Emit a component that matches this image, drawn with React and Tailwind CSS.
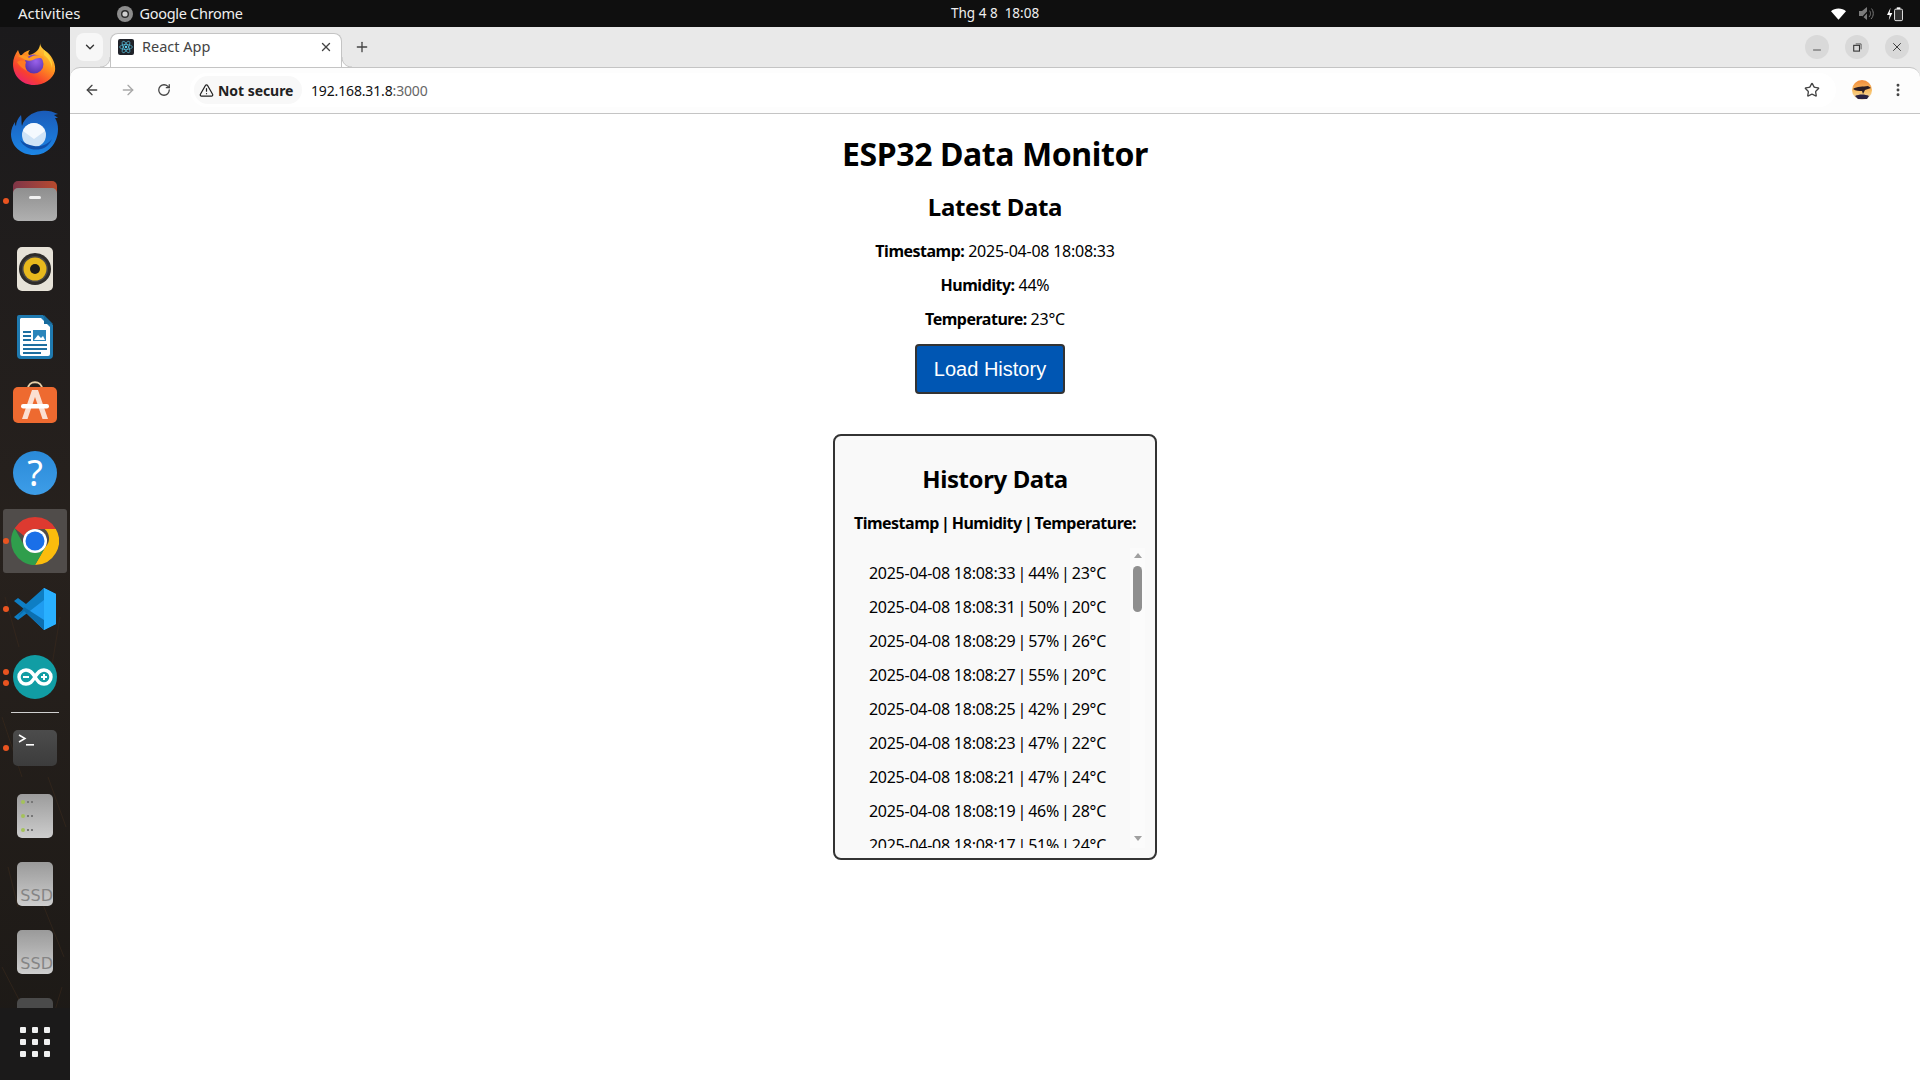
import React from "react";
import { ArrowLeft, ArrowRight, RotateCw, TriangleAlert, Star, EllipsisVertical, X, Plus, ChevronDown, Minus } from "lucide-react";

const rows = [
  ["33", "44", "23"], ["31", "50", "20"], ["29", "57", "26"], ["27", "55", "20"], ["25", "42", "29"],
  ["23", "47", "22"], ["21", "47", "24"], ["19", "46", "28"], ["17", "51", "24"],
];

const Firefox = () => (
  <svg width="44" height="44" viewBox="0 0 44 44" className="-mt-[2px]">
    <defs>
      <linearGradient id="ff1" x1="0.85" y1="0" x2="0.2" y2="1"><stop offset="0" stopColor="#ffe34a" /><stop offset="0.4" stopColor="#ff9a1e" /><stop offset="0.75" stopColor="#f8402f" /><stop offset="1" stopColor="#e81d7a" /></linearGradient>
      <radialGradient id="ff2" cx="0.6" cy="0.35" r="0.7"><stop offset="0" stopColor="#9a62ec" /><stop offset="1" stopColor="#5530a8" /></radialGradient>
    </defs>
    <path d="M27 0c0 5 3 7 7 10 6 5 9 13 8 19-2 8-11 14-21 14C9 43 0 34 0 22c0-5 2-10 5-14 1 3 2 5 3 6 2-3 5-5 9-6-2 2-2 4-1 5 6-1 12-6 11-13z" fill="url(#ff1)" />
    <circle cx="21" cy="22" r="9.5" fill="url(#ff2)" />
    <path d="M5 14c5-2 8-1 11 2 4-3 9-4 14-1l1 2c-4-2-8-1-11 1-3 1-7 1-9-1-2-1-4-2-6-3z" fill="#ff9a24" />
    <path d="M4 20c3-2 7-2 9 0-1 3-1 6 1 9-4-2-8-5-10-9z" fill="#ff7a20" />
    <path d="M31 8c5 4 9 11 8 18-1-6-4-10-8-13z" fill="#ffd23a" />
  </svg>
);

const Thunderbird = () => (
  <svg width="48" height="46" viewBox="0 0 48 46">
    <defs><linearGradient id="tb" x1="0.5" y1="0" x2="0.5" y2="1"><stop offset="0" stopColor="#1a5bb8" /><stop offset="1" stopColor="#1c86e6" /></linearGradient></defs>
    <path d="M10 5c1 4 0 8 1 11C13 8 21 2 30 1c6-1 11 0 17 3l-4 1 4 3-3 0c2 3 3 7 3 11 0 14-10 26-24 26C10 45 0 36 0 24 0 19 2 15 4 12c0 2 0 3 1 4 0-4 2-8 5-11z" fill="url(#tb)" />
    <circle cx="23" cy="25" r="12" fill="#cfe3f6" />
    <path d="M12 21l11 8 11-8c-2-5-7-8-11-8-5 0-9 3-11 8z" fill="#f4f9fe" />
    <path d="M9 30c4 8 13 11 21 9 5-1 9-5 11-10-5 6-11 8-18 7-6-1-10-3-14-6z" fill="#0f50ab" />
  </svg>
);

const Files = () => (
  <div className="relative w-[44px] h-[40px]">
    <div className="absolute inset-x-0 top-0 h-[20px] rounded-t-[5px] bg-gradient-to-r from-[#7f3547] to-[#b84a2c]" />
    <div className="absolute inset-x-0 bottom-0 h-[33px] rounded-[5px] bg-gradient-to-b from-[#8f8f8f] to-[#b0b0b0] flex justify-center pt-[8px]">
      <div className="w-[12px] h-[3px] rounded-[2px] bg-[#f1f1f1]" />
    </div>
  </div>
);

const Rhythmbox = () => (
  <div className="w-[36px] h-[44px] rounded-[5px] bg-[#e6e2d8] flex items-center justify-center">
    <svg width="32" height="32" viewBox="0 0 32 32">
      <circle cx="16" cy="16" r="16" fill="#2e2c2a" />
      <circle cx="16" cy="16" r="13" fill="#4a4846" />
      <circle cx="16" cy="16" r="11.5" fill="#e8b91d" />
      <circle cx="16" cy="16" r="5" fill="#1d1c1a" />
    </svg>
  </div>
);

const Writer = () => (
  <svg width="38" height="46" viewBox="0 0 38 46">
    <path d="M3 1h24l10 10v30a4 4 0 0 1-4 4H5a4 4 0 0 1-4-4V3a2 2 0 0 1 2-2z" fill="#1f7ab0" />
    <path d="M5 4h20l9 9v27a2 2 0 0 1-2 2H6a2 2 0 0 1-2-2V5z" fill="#ffffff" />
    <path d="M28 1l9 9h-9z" fill="#176a9c" />
    <rect x="7" y="17" width="8" height="2" fill="#1f6fa0" />
    <rect x="7" y="21" width="8" height="2" fill="#1f6fa0" />
    <rect x="7" y="25" width="8" height="2" fill="#1f6fa0" />
    <rect x="17" y="16" width="13" height="11" fill="#2b86bb" />
    <path d="M18 26l4-5 3 3 2-2 2 4z" fill="#fff" />
    <rect x="7" y="30" width="24" height="2" fill="#1f6fa0" />
    <rect x="7" y="34" width="24" height="2" fill="#1f6fa0" />
    <rect x="7" y="38" width="18" height="2" fill="#1f6fa0" />
  </svg>
);

const AppStore = () => (
  <svg width="44" height="44" viewBox="0 0 44 44" className="-mt-[4px]">
    <path d="M15 8c0-9 14-9 14 0" fill="none" stroke="#e8cfa8" strokeWidth="2" />
    <rect x="0" y="6" width="44" height="36" rx="5" fill="#ee6a30" />
    <path d="M19 9h6l10 29h-5.500l-7.500-22-7.500 22H9z" fill="#fbdfd2" />
    <rect x="8" y="23" width="28" height="4.500" rx="2.200" fill="#fff" />
  </svg>
);

const Help = () => (
  <div className="w-[44px] h-[44px] rounded-full bg-gradient-to-b from-[#2a8ad8] to-[#3d9de8] flex items-center justify-center">
    <span className="font-['Noto_Sans',sans-serif] text-[36px] leading-none text-white">?</span>
  </div>
);

const ChromeIcon = ({ size = 48 }) => (
  <svg width={size} height={size} viewBox="0 0 48 48">
    <path d="M24 0a24 24 0 0 1 20.800 12H24a12 12 0 0 0-10.900 7L3.700 11.300A24 24 0 0 1 24 0z" fill="#dd3a30" />
    <path d="M44.800 12A24 24 0 0 1 24 48l10.400-18a12 12 0 0 0-.800-18z" fill="#fbbc0d" />
    <path d="M3.700 11.300L14 30a12 12 0 0 0 20.400 0L24 48A24 24 0 0 1 3.700 11.300z" fill="#2f9e4c" />
    <circle cx="24" cy="24" r="12" fill="#fff" />
    <circle cx="24" cy="24" r="9.500" fill="#1a6fe8" />
  </svg>
);

const VSCode = () => (
  <svg width="44" height="44" viewBox="0 0 44 44">
    <path d="M31 1l12 6v30l-12 6-20-19z" fill="#1f9cf0" />
    <path d="M31 1l12 6v30l-12 6z" fill="#29b0ff" />
    <path d="M31 1v12L13 27l-8 6-4-3 10-8L1 14l4-3 8 6z" fill="#0e7ec4" />
    <path d="M31 43l-20-19-6 6 6-10 20 13z" fill="#0a6aa8" opacity="0.9" />
  </svg>
);

const Arduino = () => (
  <svg width="44" height="44" viewBox="0 0 44 44">
    <circle cx="22" cy="22" r="22" fill="#119da4" />
    <path d="M22 22c-3-5-5-7-9-7a7 7 0 0 0 0 14c4 0 6-2 9-7zc3-5 5-7 9-7a7 7 0 0 1 0 14c-4 0-6-2-9-7z" fill="none" stroke="#fff" strokeWidth="3.400" />
    <path d="M10 22h6M28 22h6M31 19v6" stroke="#fff" strokeWidth="2" />
  </svg>
);

const Terminal = () => (
  <div className="w-[44px] h-[36px] rounded-[5px] bg-gradient-to-b from-[#4c4c4c] to-[#3c3c3c] relative">
    <svg width="20" height="14" viewBox="0 0 20 14" className="absolute left-[5px] top-[4px]">
      <path d="M1 1l6 3.500L1 8" fill="none" stroke="#fff" strokeWidth="1.500" />
      <rect x="8" y="10" width="8" height="1.600" fill="#fff" />
    </svg>
  </div>
);

const Drive = () => (
  <div className="w-[36px] h-[44px] rounded-[5px] bg-gradient-to-b from-[#9c9c9c] to-[#cdcdcd] flex flex-col justify-center gap-[10px] pl-[4px]">
    {[0, 1, 2].map((i) => (
      <div key={i} className="flex items-center">
        <div className="w-[4px] h-[4px] rounded-full bg-[#a4c25a] mr-[2px]" />
        <div className="w-[2px] h-[2px] bg-[#777777]" />
        <div className="w-[2px] h-[2px] ml-[2px] bg-[#777777]" />
      </div>
    ))}
  </div>
);

const SSD = () => (
  <div className="w-[36px] h-[44px] rounded-[5px] bg-gradient-to-b from-[#9a9a9a] to-[#cecece] flex items-end justify-end overflow-hidden">
    <span className="font-['DejaVu_Sans',sans-serif] text-[16px] leading-[20px] text-[#858585] pr-[0px]">SSD</span>
  </div>
);

const DockItem = ({ children, dots = 0 }) => (
  <div className="relative h-[68px] w-[70px] flex items-center justify-center shrink-0">
    {dots > 0 && (
      <div className="absolute left-[3px] top-0 bottom-0 flex flex-col justify-center gap-[5px]">
        {Array.from({ length: dots }).map((_, i) => (
          <div key={i} className="w-[6px] h-[6px] rounded-full bg-[#e95420]" />
        ))}
      </div>
    )}
    {children}
  </div>
);

const Dock = () => (
  <aside className="w-[70px] shrink-0 h-full flex flex-col relative overflow-hidden bg-gradient-to-b from-[#1b1a1c] via-[#27211d] to-[#1c1916]">
    <svg className="absolute left-0 top-[560px]" width="70" height="520" viewBox="0 0 70 520">
      <g stroke="#3a2a1c" strokeWidth="1" fill="none" opacity="0.6">
        <path d="M5 10l14 50M60 30l-10 60M2 130l20 60M48 190l18 50M8 280l10 40M40 310l24 60M2 380l26 50M62 400l-12 40" />
      </g>
    </svg>
    <div className="relative flex flex-col pt-[31px] -mt-[27px]">
      <DockItem><Firefox /></DockItem>
      <DockItem><Thunderbird /></DockItem>
      <DockItem dots={1}><Files /></DockItem>
      <DockItem><Rhythmbox /></DockItem>
      <DockItem><Writer /></DockItem>
      <DockItem><AppStore /></DockItem>
      <DockItem><Help /></DockItem>
      <DockItem dots={1}>
        <div className="w-[64px] h-[64px] rounded-[3px] bg-[#504c4a] flex items-center justify-center"><ChromeIcon /></div>
      </DockItem>
      <DockItem dots={1}><VSCode /></DockItem>
      <DockItem dots={2}><Arduino /></DockItem>
      <div className="h-[1px] mt-[1px] mx-[11px] bg-[#d0d0d0] shrink-0" />
      <div className="h-[1px] shrink-0" />
      <DockItem dots={1}><Terminal /></DockItem>
      <DockItem><Drive /></DockItem>
      <DockItem><SSD /></DockItem>
      <DockItem><SSD /></DockItem>
      <DockItem>
        <div className="w-[36px] h-[44px] rounded-[5px] bg-[#4a4a4a]" />
      </DockItem>
    </div>
    <div className="absolute bottom-0 left-0 right-0 h-[72px] pb-[4px] bg-[#1b1a1a] flex items-center justify-center">
      <div className="grid grid-cols-3 gap-[6px]">
        {Array.from({ length: 9 }).map((_, i) => (
          <div key={i} className="w-[6px] h-[6px] rounded-[1px] bg-[#f0f0f0]" />
        ))}
      </div>
    </div>
  </aside>
);

const TopBar = () => (
  <header className="h-[27px] shrink-0 bg-[#0f0f0f] relative flex items-center text-[#eeeeee] text-[15px] font-['Noto_Sans',sans-serif]">
    <span className="ml-[18px]">Activities</span>
    <svg width="16" height="16" viewBox="0 0 16 16" className="ml-[36px] mr-[7px]">
      <circle cx="8" cy="8" r="8" fill="#8c8c8c" /><circle cx="8" cy="8" r="4" fill="#2b2b2b" /><circle cx="8" cy="8" r="2.600" fill="#cfcfcf" />
    </svg>
    <span className="text-[14.5px] tracking-[-0.3px]">Google Chrome</span>
    <span className="absolute left-[951px] text-[13.5px]">Thg 4 8&nbsp;&nbsp;18:08</span>
    <div className="ml-auto mr-[17px] flex items-center gap-[13px]">
      <svg width="15" height="12" viewBox="0 0 16 12"><path d="M0 3c4-4 12-4 16 0l-8 9z" fill="#fff" /></svg>
      <svg width="15" height="15" viewBox="0 0 15 15">
        <path d="M0 5h3l5-4v13l-5-4H0z" fill="#7b7b7b" />
        <path d="M10 4c2 2 2 5 0 7M12 2c3 3 3 8 0 11" stroke="#7b7b7b" fill="none" />
        <path d="M1 14L13 1" stroke="#0f0f0f" strokeWidth="1.200" />
      </svg>
      <svg width="16" height="16" viewBox="0 0 18 16">
        <path d="M4 1L0 9h3l-1 6 4-8H3z" fill="#fff" />
        <rect x="8.500" y="2.500" width="9" height="13" rx="1.500" fill="#fff" fillOpacity="0.15" stroke="#fff" />
        <rect x="11" y="0.500" width="4" height="2" fill="#fff" />
      </svg>
    </div>
  </header>
);

const Tab = () => (
  <div className="relative ml-[7px] mt-[6px] w-[232px] h-[34px] pb-[7px] bg-white rounded-t-[8px] border border-b-0 border-[#c4c4c4] flex items-center z-10 -mb-[1px]">
    <svg width="10" height="10" viewBox="0 0 10 10" className="absolute -left-[11px] bottom-0">
      <path d="M10 0C10 6 6 10 0 10h10z" fill="#ffffff" />
      <path d="M10 0C10 6 6 10 0 10" fill="none" stroke="#c4c4c4" />
    </svg>
    <svg width="10" height="10" viewBox="0 0 10 10" className="absolute -right-[11px] bottom-0">
      <path d="M0 0C0 6 4 10 10 10H0z" fill="#ffffff" />
      <path d="M0 0C0 6 4 10 10 10" fill="none" stroke="#c4c4c4" />
    </svg>
    <div className="w-[16px] h-[16px] ml-[7px] rounded-[2px] bg-[#20232a] flex items-center justify-center">
      <svg width="14" height="14" viewBox="-12 -12 24 24">
        <circle r="2" fill="#61dafb" />
        <g fill="none" stroke="#61dafb" strokeWidth="1">
          <ellipse rx="11" ry="4.200" /><ellipse rx="11" ry="4.200" transform="rotate(60)" /><ellipse rx="11" ry="4.200" transform="rotate(120)" />
        </g>
      </svg>
    </div>
    <span className="ml-[8px] text-[14.5px] text-[#444444] font-['Noto_Sans',sans-serif]">React App</span>
    <X size={14} strokeWidth={2.4} className="ml-auto mr-[8px] text-[#444444]" />
  </div>
);

const WinButton = ({ children }) => (
  <div className="w-[24px] h-[24px] rounded-full bg-[#d9d9d9] flex items-center justify-center text-[#333333]">{children}</div>
);

const TabStrip = () => (
  <div className="h-[40px] shrink-0 bg-[#e9e9e9] flex items-start relative">
    <div className="ml-[6px] mt-[6px] w-[27px] h-[28px] rounded-[8px] bg-[#f7f7f7] flex items-center justify-center text-[#333333]">
      <ChevronDown size={14} strokeWidth={2.4} />
    </div>
    <Tab />
    <Plus size={16} strokeWidth={2} className="ml-[12px] mt-[12px] text-[#444444]" />
    <div className="ml-auto mr-[11px] mt-[8px] flex gap-[16px]">
      <WinButton><Minus size={12} strokeWidth={1.6} className="mt-[5px]" /></WinButton>
      <WinButton>
        <svg width="9" height="9" viewBox="0 0 10 10" fill="none" stroke="#333" strokeWidth="1.200"><rect x="0.800" y="2.600" width="6.400" height="6.400" /><path d="M3 1h6v6" strokeWidth="0.800" /></svg>
      </WinButton>
      <WinButton><X size={14} strokeWidth={1.6} /></WinButton>
    </div>
  </div>
);

const Toolbar = () => (
  <div className="h-[47px] shrink-0 pb-[1px] bg-[#fdfdfd] rounded-t-[10px] border-t border-b border-[#c4c4c4] flex items-center font-['Noto_Sans',sans-serif]">
    <ArrowLeft size={16} strokeWidth={2} className="ml-[14px] text-[#444444]" />
    <ArrowRight size={16} strokeWidth={2} className="ml-[20px] text-[#a8a8a8]" />
    <RotateCw size={14} strokeWidth={2.2} className="ml-[21px] text-[#444444]" />
    <div className="ml-[19px] h-[34px] flex-1 rounded-full bg-white flex items-center relative">
      <div className="ml-[4px] h-[28px] w-[108px] rounded-full bg-[#f8f8f8] flex items-center">
        <TriangleAlert size={15} strokeWidth={2} className="ml-[5px] text-[#222222]" />
        <span className="ml-[4px] text-[14px] font-bold text-[#222222] whitespace-nowrap tracking-[-0.05px]">Not secure</span>
      </div>
      <span className="ml-[9px] text-[14px] text-[#111111] tracking-[-0.15px]">192.168.31.8<span className="text-[#666666]">:3000</span></span>
      <Star size={16} strokeWidth={2} className="ml-auto mr-[16px] text-[#444444]" />
    </div>
    <svg width="20" height="20" viewBox="0 0 20 20" className="ml-[16px]">
      <defs><linearGradient id="av" x1="0" y1="0" x2="0" y2="1"><stop offset="0" stopColor="#f08a3a" /><stop offset="0.6" stopColor="#f9c36a" /><stop offset="1" stopColor="#e8d8c0" /></linearGradient></defs>
      <circle cx="10" cy="10" r="10" fill="url(#av)" />
      <path d="M1 9c4-3 10-2 15-3l3 2-6 2-2 4-1-3c-3 0-6 0-9-2z" fill="#2a1c24" />
      <path d="M3 16c4-2 10-2 14 0l-2 3H6z" fill="#2a2240" />
    </svg>
    <EllipsisVertical size={16} strokeWidth={2.4} className="ml-[18px] mr-[14px] text-[#444444]" />
  </div>
);

const Scrollbar = () => (
  <div className="w-[15px] shrink-0 bg-[#fbfbfb] flex flex-col items-center relative">
    <div className="mt-[5px] w-0 h-0 border-x-[4.5px] border-x-transparent border-b-[5px] border-b-[#a0a0a0]" />
    <div className="mt-[8px] w-[9px] h-[46px] rounded-[5px] bg-[#8f8f8f]" />
    <div className="mt-auto mb-[7px] w-0 h-0 border-x-[4.5px] border-x-transparent border-t-[5px] border-t-[#a0a0a0]" />
  </div>
);

const Page = () => (
  <main className="flex-1 bg-white flex flex-col items-center text-center text-black font-['Noto_Sans',sans-serif] text-[16px] leading-[18px] overflow-hidden tracking-[-0.25px]">
    <h1 className="mt-[21px] text-[32px] leading-[37px] font-bold tracking-[-0.4px]">ESP32 Data Monitor</h1>
    <h2 className="mt-[21px] text-[24px] leading-[27px] font-bold tracking-[-0.33px]">Latest Data</h2>
    <p className="mt-[22px]"><strong className="font-bold tracking-[-0.5px]">Timestamp:</strong> 2025-04-08 18:08:33</p>
    <p className="mt-[16px]"><strong className="font-bold tracking-[-0.5px]">Humidity:</strong> 44%</p>
    <p className="mt-[16px]"><strong className="font-bold tracking-[-0.5px]">Temperature:</strong> 23°C</p>
    <button className="mt-[16px] mr-[10px] w-[150px] h-[50px] pb-[1px] rounded-[4px] border-2 border-[#333333] bg-[#0056b3] text-white text-[20px] tracking-normal font-['Liberation_Sans',sans-serif]">Load History</button>
    <section className="mt-[40px] w-[324px] h-[426px] rounded-[8px] border-2 border-[#333333] bg-[#f9f9f9] p-[10px]">
      <h2 className="mt-[19px] text-[24px] leading-[27px] font-bold tracking-[-0.4px]">History Data</h2>
      <p className="mt-[22px] font-bold whitespace-nowrap tracking-[-0.5px] [word-spacing:-1.4px]">Timestamp | Humidity | Temperature:</p>
      <div className="mt-[16px] h-[300px] flex overflow-hidden">
        <div className="flex-1 overflow-hidden">
          {rows.map(([s, h, t]) => (
            <p key={s} className="mt-[16px] whitespace-nowrap">2025-04-08 18:08:{s}<span className="[word-spacing:-1.8px]"> | {h}% | {t}°C</span></p>
          ))}
        </div>
        <Scrollbar />
      </div>
    </section>
  </main>
);

export default function App() {
  return (
    <div className="w-[1920px] h-[1080px] flex flex-col overflow-hidden">
      <TopBar />
      <div className="flex-1 flex min-h-0">
        <Dock />
        <div className="flex-1 flex flex-col min-w-0 bg-[#e9e9e9]">
          <TabStrip />
          <Toolbar />
          <Page />
        </div>
      </div>
    </div>
  );
}
